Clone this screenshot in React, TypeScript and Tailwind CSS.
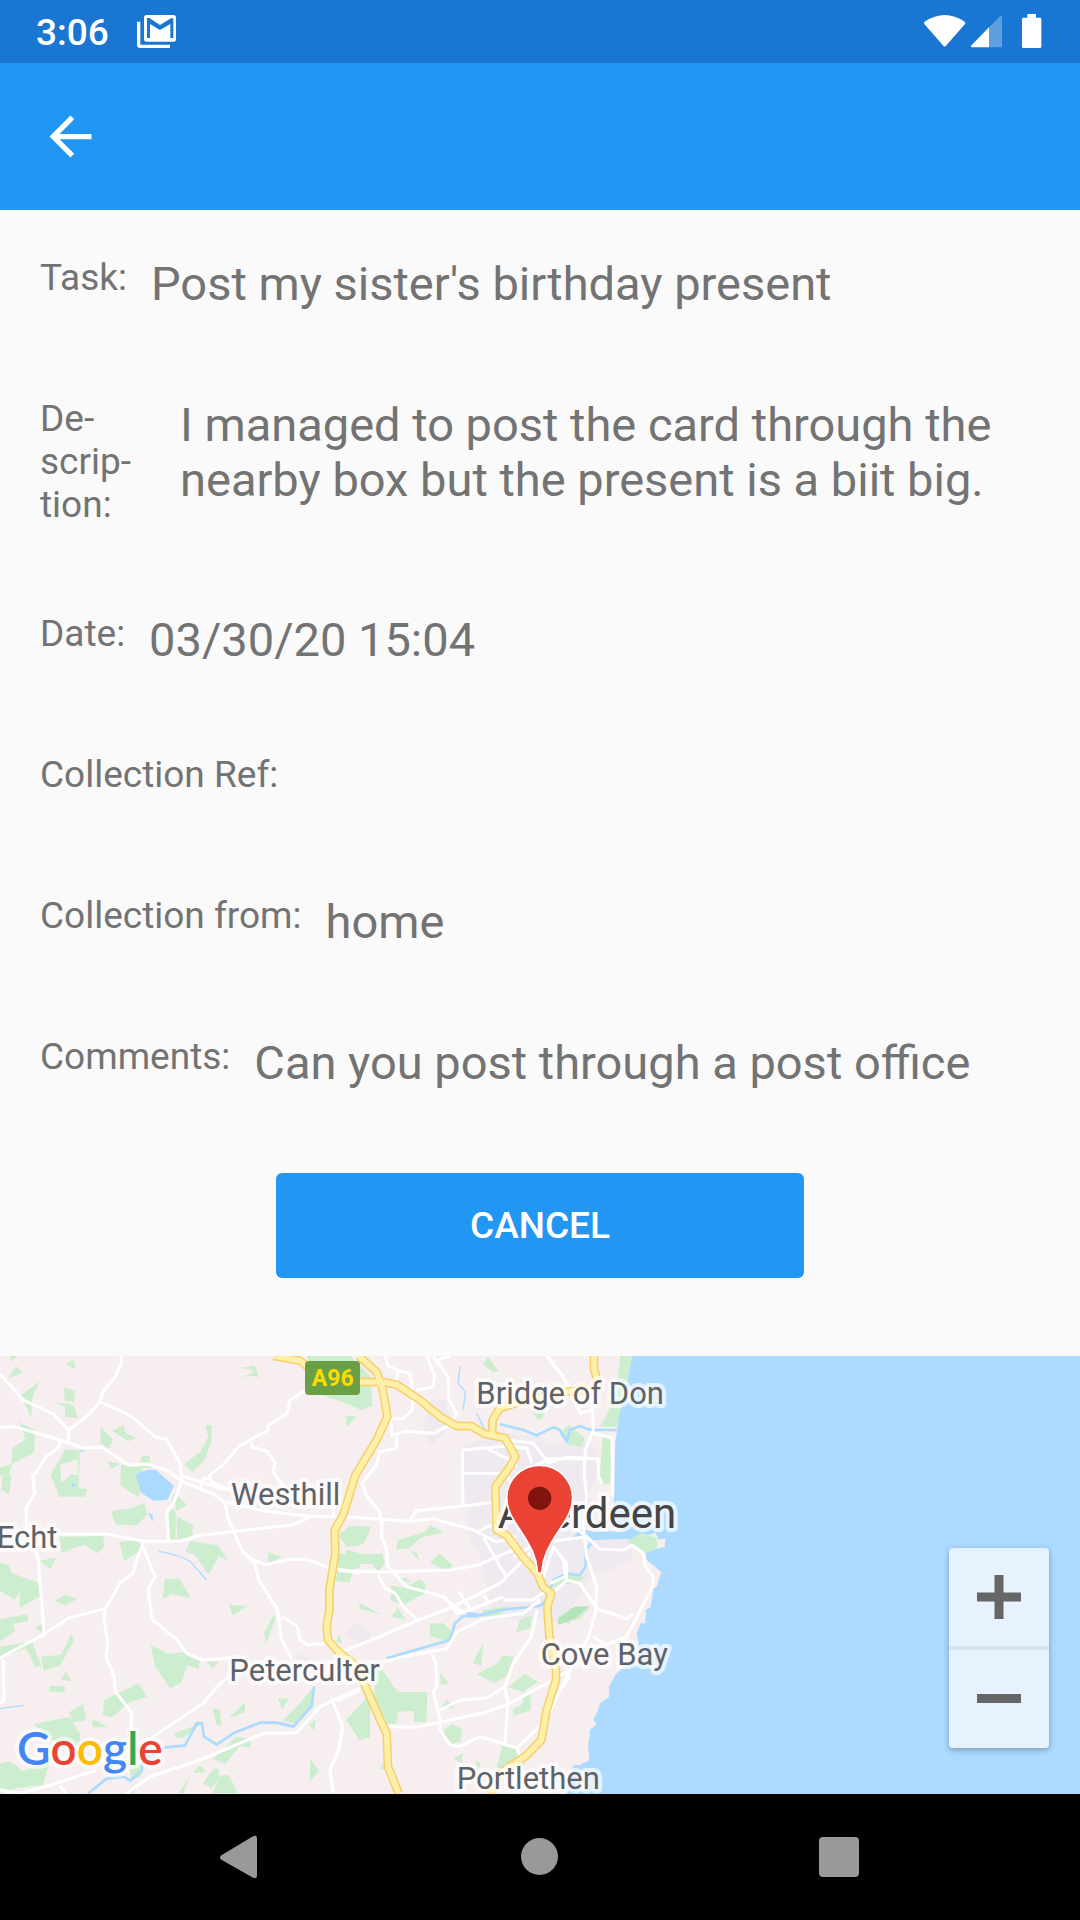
import { MdArrowBack } from "react-icons/md";

type Task = {
  label: React.ReactNode
  value: string
  narrow?: boolean
}

const details: Task[] = [
  { label: "Task:", value: "Post my sister's birthday present" },
  {
    label: <>De&shy;scrip&shy;tion:</>,
    value: "I managed to post the card through the nearby box but the present is a biit big.",
    narrow: true,
  },
  { label: "Date:", value: "03/30/20 15:04" },
  { label: "Collection Ref:", value: "" },
  { label: "Collection from:", value: "home" },
  { label: "Comments:", value: "Can you post through a post office" },
]

const App = () => {
  return (
    <div className="flex min-h-screen flex-col bg-[#fafafa] font-[Roboto,sans-serif] text-[#737373]">
      <StatusBar />

      <header className="flex h-[147px] items-center bg-[#2196f3] px-[39px]">
        <button aria-label="Back" className="text-white">
          <MdArrowBack size={63} />
        </button>
      </header>

      <main className="flex flex-1 flex-col">
        <dl className="flex flex-col gap-[86px] px-10 pt-[46px]">
          {details.map((item, i) => (
            <DetailRow key={i} {...item} />
          ))}
        </dl>

        <button className="mx-auto mt-[83px] mb-[78px] h-[105px] w-[528px] max-w-full rounded-[6px] bg-[#2196f3] text-[37px] font-medium text-white">
          CANCEL
        </button>

        <section aria-label="Map" className="relative min-h-[400px] flex-1 overflow-hidden bg-[#addbff]">
          <MapDrawing />
          <div className="absolute right-[31px] bottom-[46px] flex w-[100px] flex-col rounded-[4px] bg-[#e6f3ff] shadow-[0_2px_6px_rgba(0,0,0,0.3)]">
            <button aria-label="Zoom in" className="flex h-[98px] items-center justify-center">
              <svg width="44" height="44" viewBox="0 0 44 44" fill="#666">
                <path d="M17.500 0h9v17.500H44v9H26.500V44h-9V26.500H0v-9h17.500z" />
              </svg>
            </button>
            <div className="h-1 bg-[#d5e2ed]" />
            <button aria-label="Zoom out" className="flex h-[98px] items-center justify-center">
              <svg width="44" height="44" viewBox="0 0 44 44" fill="#666">
                <path d="M0 17h44v9H0z" />
              </svg>
            </button>
          </div>
        </section>
      </main>

      <nav className="flex h-[126px] bg-black px-[92px]">
        <button aria-label="Back" className="flex flex-1 items-center justify-center">
          <svg width="42" height="44" viewBox="0 0 42 44" fill="#999">
            <path d="M1 20.500 33 1.200Q37 -.5 37 4V40Q37 44.500 33 42.800L1 24.500Q-1 22.500 1 20.500z" />
          </svg>
        </button>
        <button aria-label="Home" className="flex flex-1 items-center justify-center">
          <svg width="38" height="38" viewBox="0 0 38 38" fill="#999">
            <circle cx="18.500" cy="18.500" r="18.500" />
          </svg>
        </button>
        <button aria-label="Recent apps" className="flex flex-1 items-center justify-center">
          <svg width="40" height="40" viewBox="0 0 40 40" fill="#999">
            <rect width="40" height="40" rx="4" />
          </svg>
        </button>
      </nav>
    </div>
  )
}

export default App


const DetailRow = ({ label, value, narrow }: Task) => {
  return (
    <div className="flex min-h-[55px] items-start gap-6">
      <dt className={narrow ? "w-29 shrink-0 text-[37px] leading-[43px]" : "shrink-0 text-[37px] leading-[43px]"}>
        {label}
      </dt>
      <dd className="text-[47px] leading-[55px]">{value}</dd>
    </div>
  )
}

const StatusBar = () => {
  return (
    <div className="flex h-[63px] items-center justify-between bg-[#1976d2] pr-[38px] pl-9 text-white">
      <div className="flex items-center gap-7">
        <span className="pt-0.5 text-[37px] leading-[43px] font-medium">3:06</span>
        <svg width="39" height="33" viewBox="0 0 117 99" fill="currentColor">
          <path d="M0 20h10v69h89v10H9Q0 99 0 90z" />
          <path
            fillRule="evenodd"
            d="M29 0h80q8 0 8 8v64q0 8-8 8H29q-8 0-8-8V8q0-8 8-8zM30 12v57h9V27l30 18 31-18v42h9V10h-7L69 30 37 9h-7z"
          />
        </svg>
      </div>
      <svg width="118" height="36" viewBox="0 0 354 108" fill="currentColor">
        <path d="M2 23Q62-17 122 23q3 3 1 7L66 95q-4 5-8 0L1 30q-2-4 1-7z" />
        <path d="M141 95 195 40v60h-52q-4-1-2-5z" />
        <path opacity=".3" d="M195 40 227 8q6-4 7 1v91h-39z" />
        <path d="M310 0h26v11h12q4 0 4 4v83q0 4-4 4h-50q-4 0-4-4V15q0-4 4-4h12z" />
      </svg>
    </div>
  )
}

// The map is drawn in three bands, west / centre / east, on a 3240 wide canvas
const MID = "translate(810 0)"
const EAST = "translate(1380 0)"

const greensWest =
  "M30 18h24l-20 16zM48 48l20 20-44 18zM196 42l24-12 6 28zM118 95 62 135l32 68 2-56zM192 112l34 10-4 34-28-4zM165 156l56 8 12 40-38-4v-30zM57 217l46 22v68l-68 36 2-48 40-28zM0 352l38-10-12 34-26 0zM8 378l27-4-8 58-23-12zM196 298l44 2-4 114 26 4-8 22-76 0-26-66zM302 230l38 40-14 28-24-18zM336 242l34-16 8 24 32 14-26 10zM615 225h20v44l-20 60-38 38-24-26 48-36 24-44zM320 333l40 8-24 16zM425 318h24v20l18 16-40 0 0 60-12 28-54-36 2-62 56 4zM332 484l64-10 38-16 8 36-32 32-62-2zM522 430l-12 40 14 14 38-18zM505 480l22-20 0 110-20 0zM530 500l49 24-2 34-46 12zM570 574l84 12 30 46-28-14-30 56-42-60-28-8zM172 520v40h30l108-2 2 32-20 20-38-26-34 10-34 16zM358 576l56-6 12 28-54 36zM120 632l48-10-16 36zM0 640l26 4 10 26 84 30v38l-60 36v-50l-16 26-44-28zM164 752l34-18 32 14-36 18zM0 808l82-16 4 22-48 8 8 22-46 30zM106 835l16-14 16 34zM0 890l96-16 28 76-20-2-26-54-78 30zM215 850l6 22-40 74-50 16-8-42 60-6zM198 964l16 30-32-4zM150 1008l44 0 0 20-46-4zM712 55l52-8 14 34-34-4-40 12 54-20-4-12zM494 688l44-2 34 58-58-12-26 16zM686 764l58 4-46 28zM820 796l8 6-30 80-6-34zM452 884l52 28 52-6 44 24-4 28-34-14-18 54-34 16-44-64zM618 936l40-2-20 20zM805 606l38 14-38 22zM312 1050l104-50 26 40-56 18-50 44-28-6zM208 1086l42-24 8 48-40 8zM276 1106l52 26-50 0zM100 1122l108-20 32 50 0 34-80-14zM0 1240l30-6 40 30 80-30-20 70-78 10-50 14-22-10zM735 1056v30l-50 20zM638 1076l22 2 4 48-14 0zM522 1150l84-30-50 40-28 4zM834 1046l34-2-22 34zM848 1112l50-50 44-54 0 50-56 62zM946 1108l-2 36-16-20zM708 1160l46 8-4 24-30-4-44 54-36-16zM930 1228l28 34-28 30zM608 1300l32-44 16 0 2 30-24 28zM660 1278l26-4 28 56-76 0zM600 1246l16 20-38 4zM570 1280l-20 50-16 0zM400 1330l20-34-34 34zM390 1258l44-20-10 40-30 14zM1040 200l30-2-32 32zM1018 550l62-24v60l-32 4zM1040 600l40 10v42l-30 8-14 34-30-2zM1020 852l6 30-18-8zM1038 1110l42-42v96z"
const greensMid =
  "M110 18h130l60 60 8 90-34 12-62-26-58-20zM640 38l14-16 32 42-14 2zM230 198l30 0-30 32zM210 552l28-24 66 2-22 50-52 10-20-26zM204 612h134l6 30-20 24-18-24-54 0-12 54-40-2zM384 570l80-24 18-20 40 22-66 14-42 34-36 2zM420 602l20 4 8 26zM480 638l28-28 42 38-22 16zM364 706l40 8 44-26 18 12 0 30-60 32-44-10zM376 690l30-8 20 16zM268 758l66 36-66-18zM364 800l20-28 22 38zM640 880l-6 68-26-10zM620 972l60-30 18-26 34 4-24 60-36 20zM480 820l40 0 30 30-10 26-60-18zM640 780l80-12-34 30-56 12zM738 848l10-36 36-18-2 40zM860 810l40-34v46zM714 1012l50-40 40 24-46 30zM728 1078l28-14 8-34 18 6 0 46-50 14zM510 966l28 36-26 2zM514 1070l18-22 22 28zM324 940l40 60 20 26 88 0-2 90-36 0-4-34-46 4-6 36-44-2-26-60zM230 1110l70-78 0 130-32 8zM524 1138l22-16 30 16-6 36-22 8-26-24zM550 1226l28-16-2 30zM616 1232l18 10-10 14zM696 1188l44 6 26 50-60 32-28-10zM784 180l40 0-6 26-18 0zM340 1240l-14 18 18 0z"
const greensEast =
  "M70 44l18-18 28 40-18 0zM480 18h36l-46 212-50 0 50-92zM326 224l48 40-8 28-46-10-22-30zM428 256l32 6-10 140-32-2zM500 574l44-26 46 16 2 32-34 12zM296 800l48-32 48 0-32 38-70 18zM290 686l36-16 50 12-24 16-56 6-30 14zM210 180l46 4-10 22z"
const urban =
  "M570 300l110-50 130 10 60 60 30 380-70 60-30 60-120-20 0-120-80-110zM480 150l50 0 10 80-60 60-20-60z"
const urbanEast =
  "M0 290l140-40 130 30 120-10 24 50-6 80-30 30 80 120 60 20-4 60-60 30-60 14-70 120-70 30-30-60-134 10z"

const waterWest =
  "M408 376q20-20 60-16l54 48-20 42-42 2-36-24zM238 300l20 0-14 6zM216 400l14 4-16 12zM444 488l14 4 0 24z"
const waterLines = [
  "M265 1330 320 1286 370 1280 390 1292 425 1262 430 1232 495 1192 555 1187 590 1120 606 1120 612 1160 650 1184 700 1150 780 1118 830 1118 880 1130 935 1068 942 1010",
  "M1160 925 1350 870 1365 820 1390 798 1430 798 1500 780 1620 768 1640 750 1660 690 1700 670 1740 676 1756 650 1758 600 1780 570",
  "M1500 222 1570 240 1610 256 1660 232 1680 240 1700 275 1710 240 1740 228 1770 240 1850 240",
]
const streams = [
  "M476 604q80 14 100 36l44 50",
  "M0 1076l70-10",
  "M1380 50 1374 100 1396 125 1390 180",
  "M1430 190 1460 250",
]

const roadsWest = [
  "M0 72 70 150 160 192 206 240 206 276",
  "M364 18v24l-22 44-34 38-8 32-36 40-58 44",
  "M300 156 380 192 405 208 468 262 500 268 540 340 546 392 522 456 500 490 506 570",
  "M0 232 44 230 180 270 246 294 306 292 386 346 440 342 494 358 550 396 640 432 672 456 790 482 920 498 1080 502",
  "M182 276 176 292 140 320 98 380 104 430 78 474 80 540 116 630 118 690 124 740 132 850",
  "M160 552h160l110 22h110l60-18 280-32 58-26",
  "M546 378 680 420",
  "M915 122 870 150 862 190 804 228 804 240 716 290 670 344 628 376 634 396 690 420",
  "M755 276v16l44 10 26 36-6 28 60 80",
  "M602 416 610 384 630 388",
  "M432 574 410 630 400 668 360 700 316 776 206 804 130 854 0 924",
  "M428 590 466 680 444 718 456 808 530 868 560 910 606 930 690 924",
  "M316 776 312 810 324 880 318 920 342 980 346 1024 394 1088 394 1150",
  "M674 456 684 506 728 606 764 640 776 690 832 776 844 866 876 930",
  "M728 606 760 630 796 644 870 628 920 628 978 650 1080 670",
  "M836 808 852 802 892 830 900 870 922 884 980 880",
  "M430 1180 610 1060 660 1000 700 970",
  "M0 1320 60 1330 150 1306 290 1260 M180 1306 196 1330",
  "M380 1330 450 1280 600 1230 790 1150 890 1148 960 1070 1080 1014",
  "M994 1042 1028 1130 1016 1200 990 1260 1000 1330",
  "M10 930 12 1050 0 1060",
  "M1010 1054 1080 1020",
]
const roadsMid = [
  "M346 18 354 48 386 62 420 70 430 130 426 180 400 206 362 206 366 256 404 244 490 250 550 220",
  "M470 18 494 76 490 110 440 120 M386 60 376 100",
  "M490 20 536 82 536 150 560 190 550 210 M498 30 540 18",
  "M380 260 380 294 330 306 318 346 276 400 290 440 326 480 336 520 334 560 350 600 354 650 410 710 520 740 580 790",
  "M190 456v44M220 500 420 514 490 506 610 540 680 576 740 560",
  "M420 510 440 482 600 466 690 454",
  "M578 466V300L730 286M580 370 700 370 720 390M650 296 720 330 740 350",
  "M208 662 350 666 540 660 620 646 740 596",
  "M325 676 346 714 376 730 400 770 444 812",
  "M214 906 330 860 440 812 550 770 690 700 780 610",
  "M340 936 400 920 530 896 560 846 640 806 760 790 810 750",
  "M640 560 690 650 710 680M620 550 650 530 700 520M524 740 560 790 600 780 700 740M566 724 600 776M640 736 656 756",
  "M700 750 790 750 830 720M700 268 790 280 830 330 M710 290 770 294 786 340",
  "M486 914 498 940 500 1010 490 1024 510 1110 510 1140 540 1184 568 1190 630 1160 740 1194 750 1216",
  "M356 1130 440 1132 530 1112 650 1086 720 1060 830 1000 900 960",
  "M510 1080 570 1050 650 1044 704 1010 730 940 784 860 802 780",
  "M704 1010 714 1060 704 1180M740 1194 830 1110 870 1020 900 980",
  "M820 680 850 590 890 640 890 690M800 680 840 720",
  "M830 18 870 70 900 110",
]
const roadsEast = [
  "M262 18 310 80 340 150 362 190 395 180M396 130 400 240 376 300 372 370 380 440 370 530 380 620 410 710 406 790 386 860 320 980 280 1060",
  "M400 250 456 264 458 440M372 326 270 326 220 350M260 340 320 322 414 326 416 380 426 400",
  "M340 530 380 560 420 598 490 600 516 586 550 610 556 650 580 680 578 710 500 860 440 884 400 860",
  "M270 740 320 690 360 700 410 776 500 806 520 790",
  "M280 590 310 630 316 680 270 700M160 620 230 580 380 560",
]
const majorRoads = [
  "M820 18 900 32 930 56 1080 96 1150 96",
  "M1076 18 1130 66 1146 110 1154 150 1162 200 1130 270 1066 376 1030 494 1004 540 1006 610 988 720 988 780 980 830 984 870 1010 900 1070 950 1140 1108 1160 1150 1164 1250 1196 1330",
  "M1150 96 1190 104 1260 150 1320 200 1370 228 1414 228 1454 252 1515 264 1546 320 1530 350 1486 410 1490 540 1520 556 1570 622 1612 670 1630 712 1654 730 1642 770 1648 860 1668 960 1668 990 1640 1080 1624 1170 1580 1216 1500 1270 1470 1330",
  "M1476 256 1478 210 1500 174 1560 156 1690 126 1770 118",
  "M1782 18V56L1794 100 1786 126",
]

const places = [
  { name: "Westhill", x: 693, y: 465 },
  { name: "Echt", x: -10, y: 595 },
  { name: "Peterculter", x: 688, y: 993 },
  { name: "Bridge of Don", x: 1429, y: 163 },
  { name: "Cove Bay", x: 1622, y: 945 },
  { name: "Portlethen", x: 1370, y: 1318 },
]

const MapDrawing = () => {
  return (
    <svg
      className="absolute inset-0 h-full w-full"
      viewBox="0 18 3240 1314"
      preserveAspectRatio="xMidYMid slice"
      fontFamily="Roboto, sans-serif"
    >
      {/* land */}
      <path
        fill="#f7eef0"
        d="M0 0H1900L1880 100 1856 200 1846 280 1842 440 1840 480 1850 530 1880 566 1930 560 1966 548 1978 570 1996 564 1994 590 1936 606 1940 630 1984 666 1970 710 1960 716 1952 770 1938 780 1936 820 1922 820 1910 850 1916 880 1900 930 1850 970 1836 994 1826 1010 1828 1040 1800 1060 1794 1080 1780 1110 1790 1122 1770 1140 1768 1170 1764 1180 1768 1230 1740 1246 1720 1244 1700 1340H0z"
      />
      <g fill="#eeeaf0">
        <path d={urban} transform={MID} />
        <path d={urbanEast} transform={EAST} />
        <path d="M1036 850l34-30 46 30-20 44zM890 908l46 14-6 34-40-10zM740 430l70 0 60 24-100 20z" />
      </g>
      <g fill="#cdeece">
        <path d={greensWest} />
        <path d={greensMid} transform={MID} />
        <path d={greensEast} transform={EAST} />
      </g>
      <path fill="#f7eef0" d="M180 344l52-16 4 48-24-2-28 24z" />
      <path fill="#b5e3b9" d="M1676 806l48-36 40 0-40 36-48 18z" />
      <path fill="#addbff" d={waterWest} />
      <path fill="#addbff" d="M1402 786l36 4-6 12-36 0zM1740 540l130 6 30 20-120 4-60-10z" />
      <g fill="none" stroke="#addbff" strokeWidth="8" strokeLinejoin="round">
        {waterLines.map((d, i) => <path key={i} d={d} />)}
      </g>
      <g fill="none" stroke="#addbff" strokeWidth="4" strokeLinejoin="round">
        {streams.map((d, i) => <path key={i} d={d} />)}
      </g>

      {/* roads */}
      <g fill="none" stroke="#fff" strokeWidth="9" strokeLinejoin="round">
        {roadsWest.map((d, i) => <path key={i} d={d} />)}
        <g transform={MID}>
          {roadsMid.map((d, i) => <path key={i} d={d} />)}
        </g>
        <g transform={EAST}>
          {roadsEast.map((d, i) => <path key={i} d={d} />)}
        </g>
      </g>
      <g fill="none" stroke="#f6cf68" strokeWidth="26" strokeLinejoin="round">
        {majorRoads.map((d, i) => <path key={i} d={d} />)}
      </g>
      <g fill="none" stroke="#fff0a9" strokeWidth="17" strokeLinejoin="round">
        {majorRoads.map((d, i) => <path key={i} d={d} />)}
      </g>

      {/* road shield */}
      <rect x="915" y="33" width="165" height="102" rx="12" fill="#6b9f45" />
      <text x="998" y="107" textAnchor="middle" fontSize="69" fontWeight="700" fill="#fbdc00">A96</text>

      {/* labels */}
      <g stroke="#fff" strokeOpacity=".7" strokeWidth="24" strokeLinejoin="round" paintOrder="stroke">
        {places.map((p) => (
          <text key={p.name} x={p.x} y={p.y} fontSize="93" fill="#5f6368">{p.name}</text>
        ))}
        <text x="1493" y="534" fontSize="126" fill="#444">Aberdeen</text>
      </g>

      {/* pin */}
      <path
        fill="#ea4335"
        stroke="#fff"
        strokeWidth="5"
        d="M1619 346c56 0 99 44 99 98 0 40-22 68-43 100-30 46-46 76-49 118q0 8-7 8t-7-8c-3-42-19-72-49-118-21-32-43-60-43-100 0-54 43-98 99-98z"
      />
      <circle cx="1619" cy="445" r="35" fill="#811411" />

      {/* logo */}
      <text
        x="51"
        y="1245"
        fontFamily="Lato, sans-serif"
        fontSize="138"
        fontWeight="600"
        stroke="#fff"
        strokeOpacity=".6"
        strokeWidth="24"
        strokeLinejoin="round"
        paintOrder="stroke"
      >
        <tspan fill="#4285f4">G</tspan>
        <tspan fill="#ea4335">o</tspan>
        <tspan fill="#fbbc04">o</tspan>
        <tspan fill="#4285f4">g</tspan>
        <tspan fill="#34a853">l</tspan>
        <tspan fill="#ea4335">e</tspan>
      </text>
    </svg>
  )
}
